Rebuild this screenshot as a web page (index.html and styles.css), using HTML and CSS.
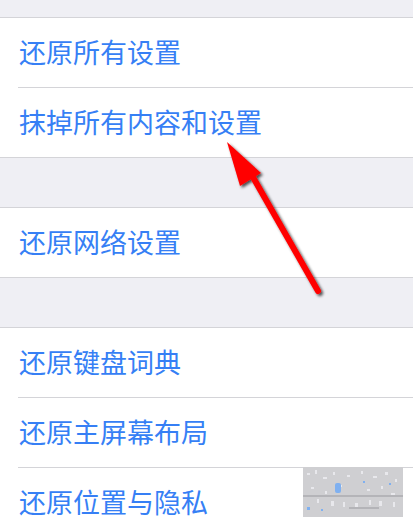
FILE: index.html
```html
<!DOCTYPE html>
<html lang="zh-CN">
<head>
<meta charset="utf-8">
<link rel="stylesheet" href="styles.css">
</head>
<body>
<div class="page">
  <div class="group first">
    <div class="row">还原所有设置</div>
    <div class="row">抹掉所有内容和设置</div>
  </div>
  <div class="group">
    <div class="row">还原网络设置</div>
  </div>
  <div class="group">
    <div class="row">还原键盘词典</div>
    <div class="row">还原主屏幕布局</div>
    <div class="row">还原位置与隐私</div>
  </div>

  <svg class="arrow" width="413" height="528" viewBox="0 0 413 528">
    <defs>
      <filter id="sh" x="-20%" y="-20%" width="140%" height="140%">
        <feGaussianBlur in="SourceAlpha" stdDeviation="1.6"/>
        <feOffset dx="1.5" dy="1.5" result="b"/>
        <feComponentTransfer><feFuncA type="linear" slope="0.7"/></feComponentTransfer>
        <feMerge><feMergeNode/><feMergeNode in="SourceGraphic"/></feMerge>
      </filter>
    </defs>
    <g filter="url(#sh)">
      <line x1="250" y1="172" x2="318" y2="291" stroke="#ff0000" stroke-width="6" stroke-linecap="round"/>
      <polygon points="227,142 261,173 240,186" fill="#ff0000"/>
    </g>
  </svg>

  <div class="watermark">
    <svg width="100" height="50" viewBox="0 0 100 50">
      <rect width="100" height="50" fill="#cfcfd2"/>
      <g fill="#e8e8ec">
        <rect x="4" y="6" width="3" height="2"/><rect x="12" y="3" width="2" height="4"/>
        <rect x="20" y="10" width="4" height="2"/><rect x="30" y="5" width="2" height="3"/>
        <rect x="44" y="8" width="3" height="2"/><rect x="58" y="4" width="2" height="3"/>
        <rect x="70" y="9" width="4" height="2"/><rect x="82" y="5" width="3" height="3"/>
        <rect x="92" y="12" width="2" height="3"/><rect x="8" y="20" width="3" height="2"/>
        <rect x="22" y="24" width="2" height="3"/><rect x="36" y="18" width="3" height="2"/>
        <rect x="64" y="22" width="3" height="2"/><rect x="78" y="19" width="2" height="3"/>
        <rect x="88" y="26" width="4" height="2"/><rect x="14" y="32" width="2" height="4"/>
        <rect x="28" y="34" width="3" height="5"/><rect x="40" y="35" width="2" height="5"/>
        <rect x="52" y="36" width="3" height="4"/><rect x="66" y="33" width="2" height="5"/>
        <rect x="76" y="34" width="3" height="5"/><rect x="90" y="35" width="2" height="5"/>
      </g>
      <g fill="#7fb0f0">
        <rect x="32" y="16" width="6" height="10" rx="2"/>
        <rect x="4" y="40" width="3" height="3"/><rect x="60" y="14" width="2" height="2"/>
        <rect x="86" y="16" width="2" height="2"/><rect x="18" y="42" width="2" height="2"/>
      </g>
      <g fill="#b4b4b8">
        <rect x="0" y="28" width="100" height="2"/>
        <rect x="46" y="40" width="30" height="2"/>
      </g>
    </svg>
  </div>
</div>
</body>
</html>
```

FILE: styles.css
```css
* { box-sizing: border-box; }
html, body {
  margin: 0;
  padding: 0;
  background: #efeff4;
}
.page {
  position: relative;
  width: 413px;
  height: 528px;
  overflow: hidden;
  font-family: "Noto Sans CJK SC", "Noto Sans", sans-serif;
}
.group {
  background: #ffffff;
  border-top: 1px solid #d4d4d8;
  border-bottom: 1px solid #d4d4d8;
  margin-top: 49px;
  padding-left: 18px;
}
.group.first {
  margin-top: 17px;
}
.row {
  height: 70px;
  display: flex;
  align-items: center;
  font-size: 27px;
  color: #367ff5;
  border-bottom: 1px solid #d4d4d8;
  padding-left: 1px;
  padding-bottom: 2px;
  line-height: 1;
}
.row:last-child {
  border-bottom: none;
  height: 69px;
}
.arrow {
  position: absolute;
  left: 0;
  top: 0;
  pointer-events: none;
}
.watermark {
  position: absolute;
  left: 303px;
  top: 467px;
  width: 100px;
  height: 50px;
}
.watermark svg { display: block; }
```
